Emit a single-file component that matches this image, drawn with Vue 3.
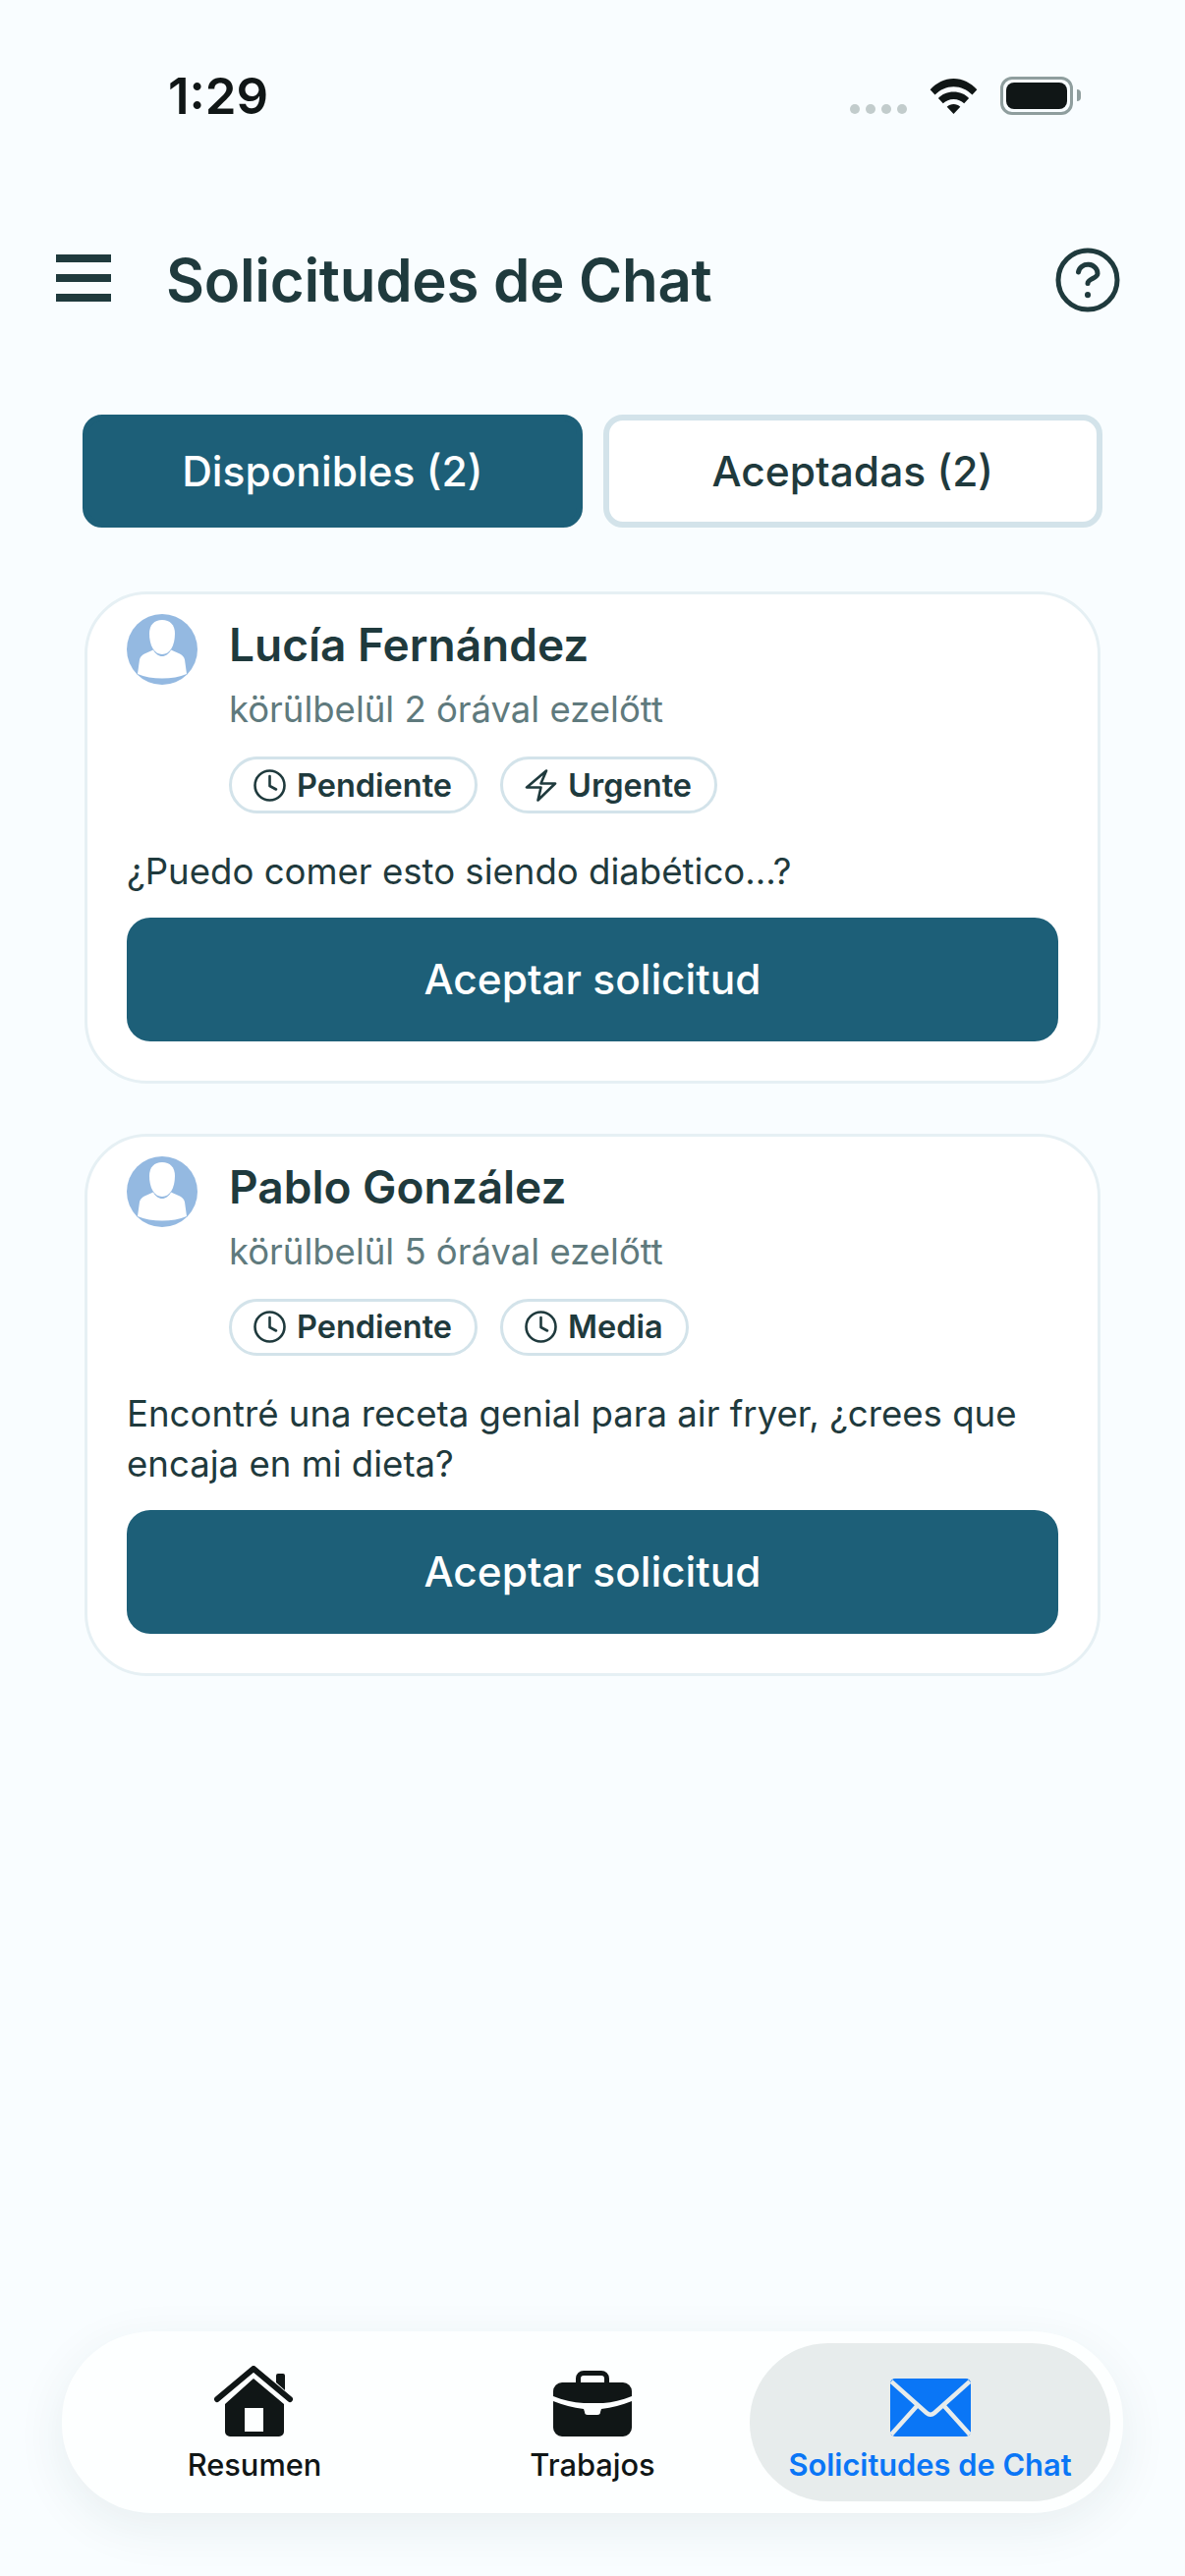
<template>
  <div class="screen">
    <div class="status">
      <span class="time">1:29</span>
      <div class="status-icons">
        <div class="dots"><i></i><i></i><i></i><i></i></div>
        <svg class="wifi" viewBox="0 0 50 38" width="51" height="37">
          <path d="M0.5 12.500C7 5.500 15.500 1 25 1s18 4.500 24.500 11.500l-5 5.500C39 12.500 32.500 9.500 25 9.500S11 12.500 5.500 18z" fill="#101616"/>
          <path d="M9 21.500C13 17.500 18.500 15 25 15s12 2.500 16 6.500l-5 5.500C33 24.200 29.500 22.500 25 22.500S17 24.200 14 27z" fill="#101616"/>
          <path d="M18 30.500c2-1.800 4.300-2.700 7-2.700s5 .9 7 2.700L25 38z" fill="#101616"/>
        </svg>
        <div class="battery"><div class="battery-fill"></div></div>
        <div class="battery-cap"></div>
      </div>
    </div>

    <header class="topbar">
      <div class="burger"><i></i><i></i><i></i></div>
      <h1>Solicitudes de Chat</h1>
      <svg class="help" viewBox="0 0 66 66" width="66" height="66" fill="none" stroke="#1f3a3d" stroke-width="5" stroke-linecap="round" stroke-linejoin="round">
        <circle cx="33" cy="33" r="30"/>
        <path d="M23.500 25a9.800 9 0 0 1 19.500 1.500c0 5-10 5-10 10"/>
        <path d="M33 48v.2" stroke-width="6"/>
      </svg>
    </header>

    <div class="tabs">
      <button class="tab active">Disponibles (2)</button>
      <button class="tab">Aceptadas (2)</button>
    </div>

    <div class="list">
      <div class="card" v-for="req in requests" :key="req.name">
        <div class="card-head">
          <svg class="avatar" viewBox="0 0 72 72" width="72" height="72">
            <circle cx="36" cy="36" r="36" fill="#94b9e1"/>
            <path d="M36 6c8 0 13 5 13 14 0 12-5 21-13 21s-13-9-13-21C23 11 28 6 36 6z" fill="#fff"/>
            <path d="M27 36.500c2 4 5.500 6.500 9 6.500s7-2.500 9-6.500l9 4c3 1.500 4.500 3.500 5 6l2 14.500c-7 3-16 4.500-25 4.500s-18-1.500-25-4.500l2-14.500c.5-2.500 2-4.500 5-6z" fill="#fff"/>
          </svg>
          <div class="who">
            <div class="name">{{ req.name }}</div>
            <div class="ago">{{ req.ago }}</div>
            <div class="chips">
              <span class="chip">
                <svg viewBox="0 0 33 33" width="33" height="33" fill="none" stroke="#1f3a3d" stroke-width="2.600" stroke-linecap="round" stroke-linejoin="round">
                  <circle cx="16.500" cy="16.500" r="15"/>
                  <path d="M16.500 7v10l6.500 3.500"/>
                </svg>
                Pendiente
              </span>
              <span class="chip">
                <svg v-if="req.level === 'Urgente'" viewBox="0 0 33 33" width="33" height="33" fill="none" stroke="#1f3a3d" stroke-width="2.600" stroke-linecap="round" stroke-linejoin="round">
                  <path d="M22 1.500 2 18.500h14.500l-3 13L31 14.500H16.500z"/>
                </svg>
                <svg v-else viewBox="0 0 33 33" width="33" height="33" fill="none" stroke="#1f3a3d" stroke-width="2.600" stroke-linecap="round" stroke-linejoin="round">
                  <circle cx="16.500" cy="16.500" r="15"/>
                  <path d="M16.500 7v10l6.500 3.500"/>
                </svg>
                {{ req.level }}
              </span>
            </div>
          </div>
        </div>
        <p class="msg">{{ req.msg }}</p>
        <button class="accept">Aceptar solicitud</button>
      </div>
    </div>

    <nav class="tabbar">
      <div class="nav-item">
        <svg viewBox="0 0 82 72" width="82" height="72">
          <path d="M3 34 40 3l37 31" fill="none" stroke="#101616" stroke-width="6" stroke-linecap="round" stroke-linejoin="round"/>
          <path d="M63 17V10a2 2 0 0 1 2-2h5a2 2 0 0 1 2 2v15z" fill="#101616"/>
          <path fill-rule="evenodd" d="M40 13 71 39v28a5 5 0 0 1-5 5H16a5 5 0 0 1-5-5V39zM31 43v24h19V43z" fill="#101616"/>
        </svg>
        <span>Resumen</span>
      </div>
      <div class="nav-item">
        <svg viewBox="0 0 80 67" width="80" height="67">
          <path fill-rule="evenodd" d="M23 14V8a8 8 0 0 1 8-8h18a8 8 0 0 1 8 8v6h-5V8a3 3 0 0 0-3-3H31a3 3 0 0 0-3 3v6z" fill="#101616"/>
          <path d="M9 12h62a9 9 0 0 1 9 9v5c-10 4-20 6.500-29 7H31C20 32.500 10 30 0 26v-5a9 9 0 0 1 9-9z" fill="#101616"/>
          <path d="M0 31c10 4 20 6.500 31 8l1 3a3 3 0 0 0 3 3h10a3 3 0 0 0 3-3l1-3c11-1.500 21-4 31-8v27a9 9 0 0 1-9 9H9a9 9 0 0 1-9-9z" fill="#101616"/>
        </svg>
        <span>Trabajos</span>
      </div>
      <div class="nav-item current">
        <svg viewBox="0 0 82 59" width="82" height="59">
          <rect width="82" height="59" rx="5" fill="#0a76f6"/>
          <path d="M1 3 28 27l9 8c2.500 2.200 5.500 2.200 8 0l9-8L81 3M28 27 1 57M54 27l27 30" fill="none" stroke="#e7ecec" stroke-width="4.500"/>
        </svg>
        <span>Solicitudes de Chat</span>
      </div>
    </nav>
  </div>
</template>

<script setup>
const requests = [
  {
    name: 'Lucía Fernández',
    ago: 'körülbelül 2 órával ezelőtt',
    level: 'Urgente',
    msg: '¿Puedo comer esto siendo diabético...?'
  },
  {
    name: 'Pablo González',
    ago: 'körülbelül 5 órával ezelőtt',
    level: 'Media',
    msg: 'Encontré una receta genial para air fryer, ¿crees que encaja en mi dieta?'
  }
]
</script>

<style>
html, body { margin: 0; background: #f9fdff; }
</style>

<style scoped>
* { box-sizing: border-box; }
.screen {
  width: 1206px;
  height: 2622px;
  background: #f9fdff;
  color: #1f3a3d;
  font-family: Inter, "Noto Sans", sans-serif;
  display: flex;
  flex-direction: column;
  overflow: hidden;
}

.status { height: 196px; padding: 68px 106px 0 171px; display: flex; justify-content: space-between; align-items: flex-start; }
.time { font-size: 51px; line-height: 60px; font-weight: 600; color: #101616; }
.status-icons { display: flex; align-items: center; height: 58px; }
.dots { display: flex; gap: 6px; margin: 28px 22px 0 0; }
.dots i { width: 10px; height: 10px; border-radius: 50%; background: #c2cccc; }
.wifi { margin-right: 22px; }
.battery { width: 74px; height: 39px; border: 3px solid #8f9e9e; border-radius: 12px; padding: 3px; }
.battery-fill { width: 100%; height: 100%; background: #101616; border-radius: 8px; }
.battery-cap { width: 4px; height: 12px; margin-left: 4px; background: #8f9e9e; border-radius: 0 4px 4px 0; }

.topbar { display: flex; align-items: center; height: 66px; margin-top: 56px; padding: 0 66px 0 57px; }
.burger { width: 56px; display: flex; flex-direction: column; gap: 12px; margin: 0 56px 4px 0; }
.burger i { display: block; height: 8px; background: #1f3a3d; }
.topbar h1 { margin: 0; flex: 1; font-size: 60px; line-height: 66px; font-weight: 600; letter-spacing: -0.3px; }

.tabs { display: flex; gap: 21px; margin-top: 104px; padding: 0 84px; }
.tab { flex: 1; height: 115px; border-radius: 20px; border: 6px solid #d3e3ea; background: #fff; color: #1f3a3d; font: 500 42.500px Inter, sans-serif; }
.tab.active { background: #1d5f78; border-color: #1d5f78; color: #fff; }

.list { display: flex; flex-direction: column; gap: 51px; margin-top: 65px; padding: 0 86px; }
.card { background: #fff; border: 3px solid #e6f0f4; border-radius: 64px; padding: 20px 40px 40px; }
.card-head { display: flex; gap: 32px; }
.avatar { flex: none; }
.who { flex: 1; padding-top: 2px; }
.name { font-size: 46px; line-height: 58px; font-weight: 600; }
.ago { margin-top: 15px; font-size: 36.500px; line-height: 44px; color: #5f7a7d; }
.chips { display: flex; gap: 23px; margin-top: 26px; }
.chip { display: flex; align-items: center; gap: 11px; height: 58px; padding: 0 23px 0 22px; border: 3px solid #d3e3ea; border-radius: 29px; font-size: 32.500px; font-weight: 600; }
.msg { margin: 34px 0 0; font-size: 36.600px; line-height: 51.500px; }
.accept { display: block; width: 100%; height: 126px; margin-top: 20px; border: 0; border-radius: 24px; background: #1d5f78; color: #fff; font: 500 42.400px Inter, sans-serif; }

.tabbar {
  margin: auto 63px 64px;
  height: 185px;
  padding: 12px 13px 12px 12px;
  display: grid;
  grid-template-columns: 368px 320px 367px;
  background: #fdffff;
  border-radius: 92px / 90px;
  box-shadow: 0 14px 50px rgba(30, 60, 70, 0.08);
}
.nav-item { display: flex; flex-direction: column; align-items: center; justify-content: flex-end; gap: 10px; padding-bottom: 19px; font-size: 30.800px; font-weight: 500; color: #101616; border-radius: 80px; }
.nav-item.current { background: #e7ecec; color: #0a76f6; font-weight: 600; }
</style>
